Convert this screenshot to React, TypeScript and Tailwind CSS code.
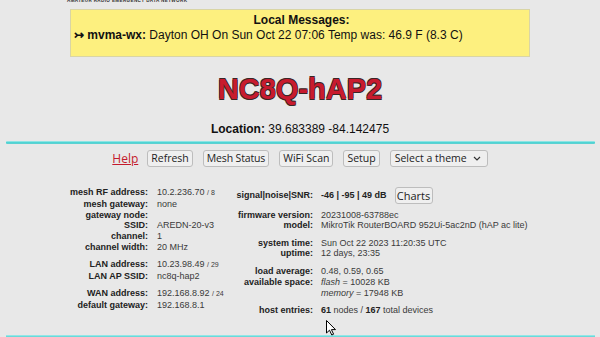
import React from "react";

const Btn = ({ children, cls = "" }: { children: React.ReactNode; cls?: string }) => (
  <div
    className={
      "h-[17px] px-[3px] flex items-center border border-[#bdbdbd] rounded-[3px] bg-[#efefef] text-[10.5px] text-[#222] font-['Open_Sans'] leading-none " +
      cls
    }
  >
    {children}
  </div>
);

const L = ({ children }: { children: React.ReactNode }) => (
  <div className="text-right font-bold text-[#222] whitespace-nowrap">{children}</div>
);
const V = ({ children }: { children: React.ReactNode }) => (
  <div className="text-[#3a3a3a] whitespace-nowrap">{children}</div>
);

const Small = ({ children }: { children: React.ReactNode }) => (
  <span className="text-[7px]">{children}</span>
);

export default function App() {
  return (
    <div className="relative w-[600px] h-[337px] overflow-hidden bg-[#e8e8e8] font-['Liberation_Sans',Arial,sans-serif] flex flex-col">
      {/* tagline */}
      <div className="h-[4px] overflow-hidden shrink-0">
        <div className="pl-[67px] -mt-[2px] text-[4.6px] leading-[6px] font-bold tracking-[0.35px] text-[#333] whitespace-nowrap">
          AMATEUR RADIO EMERGENCY DATA NETWORK
        </div>
      </div>

      {/* messages */}
      <div className="mt-[5px] ml-[70px] w-[460px] h-[48px] shrink-0 bg-[#fdf07f] border border-[#d9d5a5] pt-[3px] pl-[3px] text-[12px] leading-[15px] text-[#111]">
        <div className="text-center font-bold">Local Messages:</div>
        <div className="whitespace-nowrap">
          <span className="font-bold">↣ mvma-wx:</span> Dayton OH On Sun Oct 22 07:06 Temp was: 46.9 F (8.3 C)
        </div>
      </div>

      {/* title */}
      <div className="mt-[16px] text-center text-[29px] leading-[33px] font-bold text-[#c81b2e] [text-shadow:0.6px_0.6px_0_#3a2626,-0.6px_-0.6px_0_#3a2626,0.6px_-0.6px_0_#3a2626,-0.6px_0.6px_0_#3a2626] shrink-0">
        NC8Q-hAP2
      </div>

      <div className="mt-[16px] text-center text-[12px] leading-[14px] text-[#111] shrink-0">
        <span className="font-bold">Location:</span> 39.683389 -84.142475
      </div>

      <div className="mt-[5px] ml-[6px] w-[589px] h-[3px] shrink-0 rounded-[1px] bg-gradient-to-b from-[#a6ecec] via-[#4fd4d4] to-[#62d0d0]" />

      {/* buttons */}
      <div className="mt-[6px] flex justify-center items-center gap-[10px] shrink-0">
        <span className="text-[12px] text-[#c41a2c] underline font-['Open_Sans'] leading-none -mr-[1px]">Help</span>
        <Btn>Refresh</Btn>
        <Btn cls="tracking-[-0.15px]">Mesh Status</Btn>
        <Btn>WiFi Scan</Btn>
        <Btn>Setup</Btn>
        <Btn cls="w-[98px] justify-between pl-[4px] pr-[6px]">
          <span>Select a theme</span>
          <svg width="8" height="5" viewBox="0 0 8 5">
            <path d="M1 1 L4 4 L7 1" stroke="#333" strokeWidth="1.2" fill="none" />
          </svg>
        </Btn>
      </div>

      {/* info */}
      <div className="flex-1 mt-[20px] flex items-start text-[9px] leading-[10.75px]">
        <div className="w-[230px] shrink-0">
          <div className="grid grid-cols-[148px_1fr] gap-x-[9px]">
            <L>mesh RF address:</L>
            <V>
              10.2.236.70 <Small>/ 8</Small>
            </V>
            <L>mesh gateway:</L>
            <V>none</V>
            <L>gateway node:</L>
            <V>&nbsp;</V>
            <L>SSID:</L>
            <V>AREDN-20-v3</V>
            <L>channel:</L>
            <V>1</V>
            <L>channel width:</L>
            <V>20 MHz</V>
          </div>
          <div className="mt-[6.5px] grid grid-cols-[148px_1fr] gap-x-[9px]">
            <L>LAN address:</L>
            <V>
              10.23.98.49 <Small>/ 29</Small>
            </V>
            <L>LAN AP SSID:</L>
            <V>nc8q-hap2</V>
          </div>
          <div className="mt-[6.5px] grid grid-cols-[148px_1fr] gap-x-[9px]">
            <L>WAN address:</L>
            <V>
              192.168.8.92 <Small>/ 24</Small>
            </V>
            <L>default gateway:</L>
            <V>192.168.8.1</V>
          </div>
        </div>

        <div className="flex-1">
          <div className="grid grid-cols-[83px_1fr] gap-x-[8px] items-center">
            <L>signal|noise|SNR:</L>
            <div className="flex items-center h-[16px]">
              <span className="font-bold text-[#222]">-46 | -95 | 49 dB</span>
              <div className="ml-[8px] h-[17px] w-[38px] flex items-center justify-center border border-[#bdbdbd] rounded-[3px] bg-[#efefef] text-[11px] text-[#222] font-['Open_Sans'] leading-none">
                Charts
              </div>
            </div>
          </div>
          <div className="mt-[6.5px] grid grid-cols-[83px_1fr] gap-x-[8px]">
            <L>firmware version:</L>
            <V>20231008-63788ec</V>
            <L>model:</L>
            <V>MikroTik RouterBOARD 952Ui-5ac2nD (hAP ac lite)</V>
          </div>
          <div className="mt-[6.5px] grid grid-cols-[83px_1fr] gap-x-[8px]">
            <L>system time:</L>
            <V>Sun Oct 22 2023 11:20:35 UTC</V>
            <L>uptime:</L>
            <V>12 days, 23:35</V>
          </div>
          <div className="mt-[7px] grid grid-cols-[83px_1fr] gap-x-[8px]">
            <L>load average:</L>
            <V>0.48, 0.59, 0.65</V>
            <L>available space:</L>
            <V>
              <i>flash</i> = 10028 KB
            </V>
            <L>&nbsp;</L>
            <V>
              <i>memory</i> = 17948 KB
            </V>
          </div>
          <div className="mt-[7px] grid grid-cols-[83px_1fr] gap-x-[8px]">
            <L>host entries:</L>
            <V>
              <b className="text-[#222]">61</b> nodes / <b className="text-[#222]">167</b> total devices
            </V>
          </div>
        </div>
      </div>

      <div className="ml-[6px] w-[589px] h-[2px] shrink-0 bg-gradient-to-b from-[#a6ecec] to-[#4fd4d4]" />

      {/* mouse cursor */}
      <svg className="absolute left-[326px] top-[320px]" width="12" height="16" viewBox="0 0 12 16">
        <path d="M0.5 0.5 L0.5 13 L3.5 10.2 L5.8 15 L7.6 14.2 L5.4 9.6 L9.5 9.6 Z" fill="#fff" stroke="#000" strokeWidth="1" strokeLinejoin="round" />
      </svg>
    </div>
  );
}
